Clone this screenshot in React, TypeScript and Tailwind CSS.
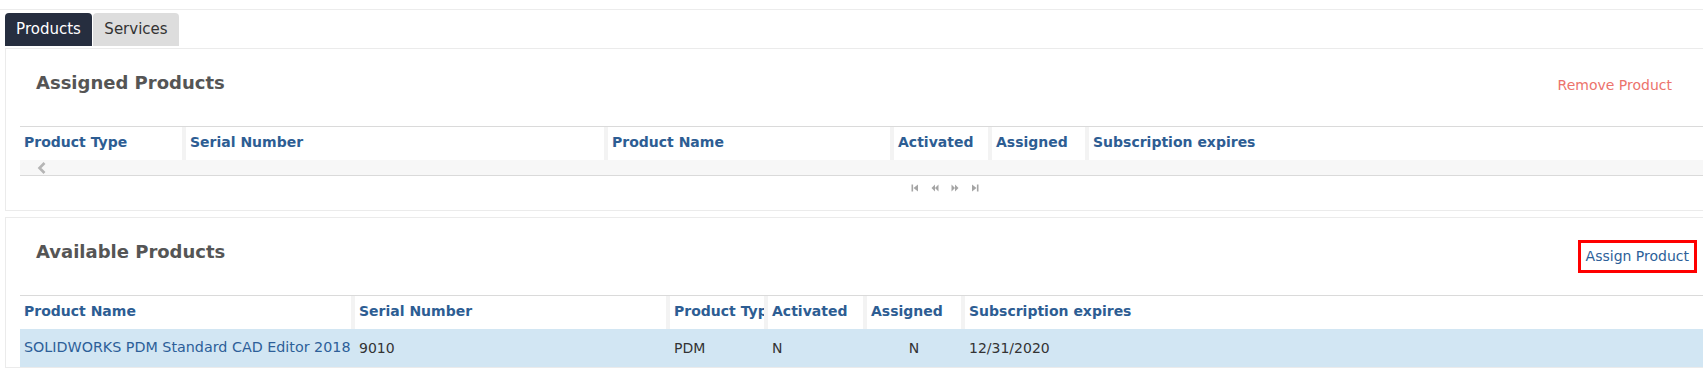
type Col = { label: string; w: string; first?: boolean };

const ASSIGNED_COLS: Col[] = [
	{ label: "Product Type", w: "w-[162px]", first: true },
	{ label: "Serial Number", w: "w-[422px]" },
	{ label: "Product Name", w: "w-[286px]" },
	{ label: "Activated", w: "w-[98px]" },
	{ label: "Assigned", w: "w-[97px]" },
	{ label: "Subscription expires", w: "flex-1" },
];

const AVAILABLE_COLS: Col[] = [
	{ label: "Product Name", w: "w-[331px]", first: true },
	{ label: "Serial Number", w: "w-[315px]" },
	{ label: "Product Type", w: "w-[98px]" },
	{ label: "Activated", w: "w-[99px]" },
	{ label: "Assigned", w: "w-[98px]" },
	{ label: "Subscription expires", w: "flex-1" },
];

const AVAILABLE_ROWS = [
	{
		name: "SOLIDWORKS PDM Standard CAD Editor 2018",
		serial: "9010",
		type: "PDM",
		activated: "N",
		assigned: "N",
		expires: "12/31/2020",
	},
];

function HeaderRow({ cols }: { cols: Col[] }) {
	return (
		<div className="flex h-[34px] border-t border-[#dadada]">
			{cols.map((c) => (
				<div
					key={c.label}
					className={`${c.w} flex items-center overflow-hidden whitespace-nowrap pb-[3px] pl-[4px] font-bold text-[#2d5d93] ${
						c.first ? "" : "border-l-[4px] border-[#f3f3f3]"
					}`}
				>
					{c.label}
				</div>
			))}
		</div>
	);
}

function PagerIcon({ kind }: { kind: "first" | "prev" | "next" | "last" }) {
	return (
		<svg width="8" height="8" viewBox="0 0 8 8" className="fill-[#a5a5a5]">
			{kind === "first" && (
				<>
					<rect x="0.5" y="0.5" width="1.6" height="7" />
					<path d="M7 0.5 L2.5 4 L7 7.5 Z" />
				</>
			)}
			{kind === "prev" && (
				<>
					<path d="M4 0.5 L0.5 4 L4 7.5 Z" />
					<path d="M7.5 0.5 L4 4 L7.5 7.5 Z" />
				</>
			)}
			{kind === "next" && (
				<>
					<path d="M0.5 0.5 L4 4 L0.5 7.5 Z" />
					<path d="M4 0.5 L7.5 4 L4 7.5 Z" />
				</>
			)}
			{kind === "last" && (
				<>
					<path d="M1 0.5 L5.5 4 L1 7.5 Z" />
					<rect x="5.9" y="0.5" width="1.6" height="7" />
				</>
			)}
		</svg>
	);
}

function Panel({
	title,
	action,
	children,
}: {
	title: string;
	action: React.ReactNode;
	children: React.ReactNode;
}) {
	return (
		<div className="ml-[5px] border border-r-0 border-[#ebebeb]">
			<div className="flex h-[77px] items-start justify-between">
				<h2 className="flex h-[67px] items-center pl-[30px] text-[18px] font-bold text-[#555]">
					{title}
				</h2>
				{action}
			</div>
			<div className="ml-[14px]">{children}</div>
		</div>
	);
}

export default function App() {
	return (
		<div className="h-[370px] w-full overflow-hidden bg-white font-['DejaVu_Sans',sans-serif] text-[14px] text-[#333]">
			<div className="h-[10px] border-b border-[#ececec]" />

			<div className="mt-[3px] flex pl-[5px] text-[15px]">
				<div className="flex h-[33px] w-[87px] items-center justify-center rounded-t-[4px] bg-[#262e3f] text-white">
					Products
				</div>
				<div className="ml-px flex h-[33px] w-[86px] items-center justify-center rounded-t-[4px] bg-[#dddddd] text-[#333]">
					Services
				</div>
			</div>

			<div className="mt-[2px]">
				<Panel
					title="Assigned Products"
					action={
						<span className="flex h-[73px] items-center pr-[31px] text-[#ec736c]">
							Remove Product
						</span>
					}
				>
					<HeaderRow cols={ASSIGNED_COLS} />
					<div className="flex h-[16px] items-center border-b border-[#dadada] bg-[#f7f7f7] pl-[17px]">
						<svg width="10" height="12" viewBox="0 0 10 12">
							<path
								d="M7.5 1 L2.5 6 L7.5 11"
								fill="none"
								stroke="#b5b5b5"
								strokeWidth="2.6"
							/>
						</svg>
					</div>
					<div className="flex h-[34px] items-start gap-[12px] pl-[891px] pt-[8px]">
						<PagerIcon kind="first" />
						<PagerIcon kind="prev" />
						<PagerIcon kind="next" />
						<PagerIcon kind="last" />
					</div>
				</Panel>
			</div>

			<div className="mt-[6px]">
				<Panel
					title="Available Products"
					action={
						<div className="mt-[22px] mr-[6px] border-[3px] border-[#ff0000] px-[5px] py-[3px] text-[#2d5f99]">
							Assign Product
						</div>
					}
				>
					<HeaderRow cols={AVAILABLE_COLS} />
					{AVAILABLE_ROWS.map((r) => (
						<div key={r.serial} className="flex h-[38px] bg-[#d2e6f3]">
							<div className="w-[331px] flex items-center overflow-hidden whitespace-nowrap pl-[4px] text-[14.3px] text-[#2d5f99]">
								{r.name}
							</div>
							<div className="w-[315px] flex items-center border-l-[4px] border-transparent pl-[4px]">
								{r.serial}
							</div>
							<div className="w-[98px] flex items-center border-l-[4px] border-transparent pl-[4px]">
								{r.type}
							</div>
							<div className="w-[99px] flex items-center border-l-[4px] border-transparent pl-[4px]">
								{r.activated}
							</div>
							<div className="w-[98px] flex items-center justify-center border-l-[4px] border-transparent">
								{r.assigned}
							</div>
							<div className="flex-1 flex items-center border-l-[4px] border-transparent pl-[4px]">
								{r.expires}
							</div>
						</div>
					))}
				</Panel>
			</div>
		</div>
	);
}
